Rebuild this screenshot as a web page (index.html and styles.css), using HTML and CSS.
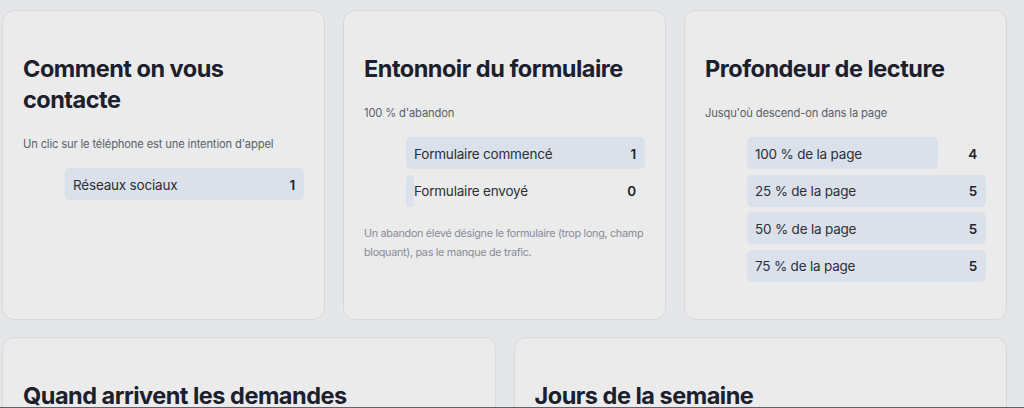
FILE: index.html
```html
<!DOCTYPE html>
<html lang="fr">
<head>
<meta charset="utf-8">
<title>Statistiques</title>
<link rel="stylesheet" href="styles.css">
</head>
<body>
<main class="page">
  <section class="row row-3">
    <article class="card">
      <h2 class="card-title">Comment on vous contacte</h2>
      <p class="card-sub">Un clic sur le téléphone est une intention d'appel</p>
      <ul class="bars">
        <li class="bar"><span class="bar-fill" style="width:100%"></span><span class="bar-label">Réseaux sociaux</span><span class="bar-value">1</span></li>
      </ul>
    </article>
    <article class="card">
      <h2 class="card-title">Entonnoir du formulaire</h2>
      <p class="card-sub">100 % d'abandon</p>
      <ul class="bars">
        <li class="bar"><span class="bar-fill" style="width:100%"></span><span class="bar-label">Formulaire commencé</span><span class="bar-value">1</span></li>
        <li class="bar"><span class="bar-fill" style="width:0%"></span><span class="bar-label">Formulaire envoyé</span><span class="bar-value">0</span></li>
      </ul>
      <p class="card-note">Un abandon élevé désigne le formulaire (trop long, champ bloquant), pas le manque de trafic.</p>
    </article>
    <article class="card">
      <h2 class="card-title">Profondeur de lecture</h2>
      <p class="card-sub">Jusqu'où descend-on dans la page</p>
      <ul class="bars">
        <li class="bar"><span class="bar-fill" style="width:80%"></span><span class="bar-label">100 % de la page</span><span class="bar-value">4</span></li>
        <li class="bar"><span class="bar-fill" style="width:100%"></span><span class="bar-label">25 % de la page</span><span class="bar-value">5</span></li>
        <li class="bar"><span class="bar-fill" style="width:100%"></span><span class="bar-label">50 % de la page</span><span class="bar-value">5</span></li>
        <li class="bar"><span class="bar-fill" style="width:100%"></span><span class="bar-label">75 % de la page</span><span class="bar-value">5</span></li>
      </ul>
    </article>
  </section>
  <section class="row row-2">
    <article class="card">
      <h2 class="card-title">Quand arrivent les demandes</h2>
    </article>
    <article class="card">
      <h2 class="card-title">Jours de la semaine</h2>
    </article>
  </section>
</main>
<div class="edge"></div>
</body>
</html>
```

FILE: styles.css
```css
html, body {
  margin: 0;
  padding: 0;
  background: #e5e6e8;
  font-family: Inter, "Noto Sans", "DejaVu Sans", sans-serif;
  color: #1b202c;
  overflow: hidden;
}

.page {
  padding: 10px 17px 0 2px;
  display: flex;
  flex-direction: column;
  gap: 17px;
}

.row {
  display: grid;
  column-gap: 18px;
}

.row-3 {
  grid-template-columns: 1fr 1fr 1fr;
}

.row-2 {
  grid-template-columns: 1fr 1fr;
}

.card {
  background: #ebebec;
  border: 1px solid #d6d8dc;
  border-radius: 12px;
  padding: 42px 20px 38px;
  box-sizing: border-box;
}

.row-3 .card {
  height: 310px;
}

.row-2 .card {
  height: 120px;
}

.card-title {
  margin: 0;
  font-size: 23.5px;
  line-height: 31px;
  font-weight: 700;
  letter-spacing: -0.5px;
  color: #1b202c;
}

.card-sub {
  margin: 20px 0 0;
  font-size: 11.2px;
  line-height: 18px;
  color: #595f6b;
  letter-spacing: -0.15px;
}

.bars {
  list-style: none;
  margin: 15px 0 0 42px;
  padding: 0;
  display: flex;
  flex-direction: column;
  gap: 5.5px;
}

.bar {
  position: relative;
  height: 32px;
  display: flex;
  align-items: center;
  justify-content: space-between;
  padding: 1px 9px 0 8px;
  box-sizing: border-box;
  font-size: 13.5px;
  color: #2a2f3b;
  letter-spacing: -0.2px;
}

.bar-fill {
  position: absolute;
  left: 0;
  top: 0;
  bottom: 0;
  min-width: 8px;
  background: #dbe1ea;
  border-radius: 5px;
}

.bar-label,
.bar-value {
  position: relative;
}

.bar-value {
  font-weight: 600;
  color: #1f2430;
}

.card-note {
  margin: 17px 0 0;
  font-size: 10.8px;
  line-height: 19px;
  color: #878c97;
  letter-spacing: -0.3px;
  margin-right: -4px;
}

.edge {
  position: fixed;
  left: 0;
  right: 0;
  bottom: 0;
  height: 1px;
  background: #5f6166;
}
```
